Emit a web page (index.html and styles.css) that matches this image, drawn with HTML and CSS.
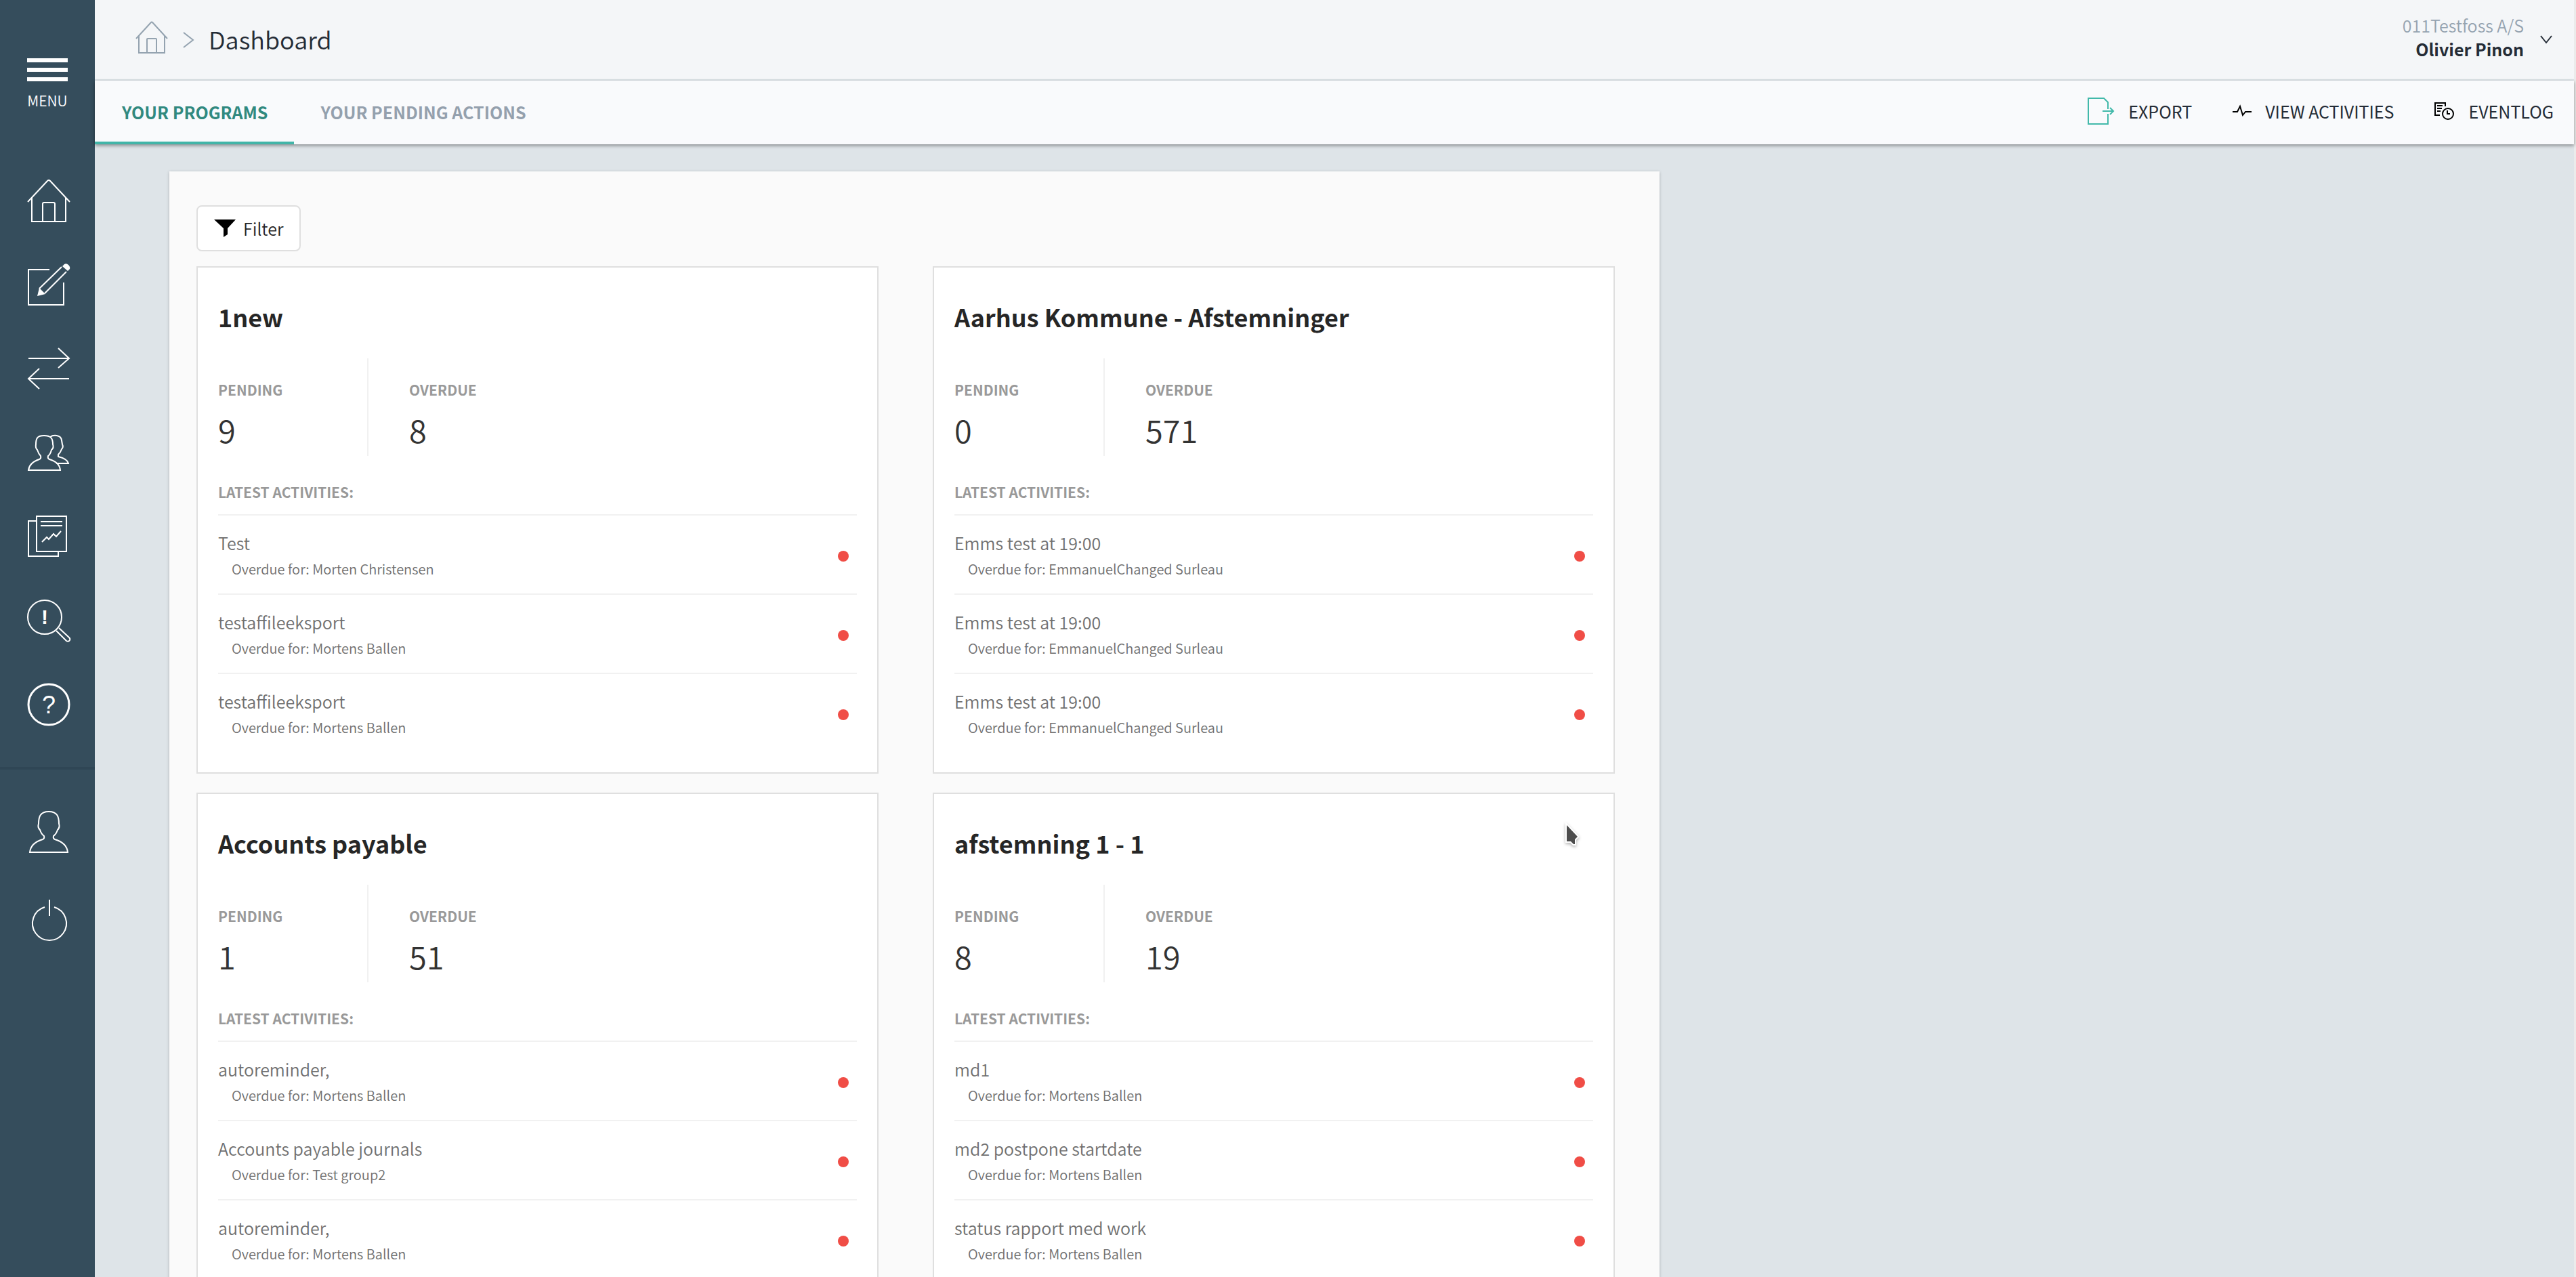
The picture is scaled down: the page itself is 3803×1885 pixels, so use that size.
FILE: index.html
```html
<!DOCTYPE html>
<html lang="en">
<head>
<meta charset="utf-8">
<title>Dashboard</title>
<link rel="stylesheet" href="styles.css">
</head>
<body>
<div class="app">
  <nav class="sidebar" aria-label="Main menu">
    <button class="menu-toggle" type="button">
      <span class="bars"><span class="bar"></span><span class="bar"></span><span class="bar"></span></span>
      MENU
    </button>
    <div class="nav-group">
      <a href="#" aria-label="Home"><svg class="nav-icon" viewBox="0 0 64 64"><path d="M1 34 30 3q2-2 4 0L63 34M7 28V63H57V28M23 63V37q0-2 2-2h14q2 0 2 2V63"/></svg></a>
      <a href="#" aria-label="Edit"><svg class="nav-icon" viewBox="0 0 64 64"><path d="M33 10H2V62H54V29M51 6 18 38M58 13 26 45"/><path class="solid" d="M52 5l3-3q3-2 6 1 3 3 2 6l-3 3zM18 37l9 9-12 3z"/></svg></a>
      <a href="#" aria-label="Transfer"><svg class="nav-icon" viewBox="0 0 64 64"><path d="M2 17H61M46 2 62 17 46 31M62 47H3M18 32 2 47 18 62"/></svg></a>
      <a href="#" aria-label="Users"><svg class="nav-icon" viewBox="0 0 64 64"><path d="M2 58C3 50 9 45 18 42Q21 41 20 37C17 34 16 31 15 28Q12 25 13 20C13 11 15 7 25 7S38 11 38 20Q40 25 36 28C35 32 34 35 31 37Q30 41 33 42C42 45 48 49 49 58ZM34 9C38 6 50 5 51 14L52 20Q54 24 51 27C50 30 48 33 46 35V38C54 40 60 43 61 48H43"/></svg></a>
      <a href="#" aria-label="Reports"><svg class="nav-icon" viewBox="0 0 64 64"><path d="M14 2H58V54H14ZM14 9H2V61H46V54M20 10H52M20 16H52M22 40 29 33 32 36 39 28 43 32 50 24"/></svg></a>
      <a href="#" aria-label="Find issues"><svg class="nav-icon" viewBox="0 0 64 64"><circle cx="26" cy="27" r="25"/><path d="M43 47 58 62Q61 64 63 61 64 59 62 57L47 43"/><text class="mark mark-bold" x="26" y="37">!</text></svg></a>
      <a href="#" aria-label="Help"><svg class="nav-icon" viewBox="0 0 64 64"><circle class="thick" cx="32" cy="32" r="30"/><text class="mark" x="32" y="45">?</text></svg></a>
    </div>
    <div class="nav-group account">
      <a href="#" aria-label="Profile"><svg class="nav-icon" viewBox="0 0 64 64"><path d="M4 62C5 52 13 46 23 43Q26 42 25 38C22 36 20 32 19 29Q15 25 17 20C17 10 19 2 32 2S47 10 47 20Q49 25 45 29C44 32 42 36 39 38Q38 42 41 43C51 46 59 52 60 62Z"/></svg></a>
      <a href="#" aria-label="Log out"><svg class="nav-icon" viewBox="0 0 64 64"><path d="M26 13A25 25 0 1 0 40 13M33 2V26"/></svg></a>
    </div>
  </nav>

  <div class="page">
    <header class="topbar">
      <div class="breadcrumb">
        <a href="#" aria-label="Home"><svg class="crumb-home" viewBox="0 0 48 48"><path d="M1 26 23 2q1-1 2 0L47 26M5 21V47H43V21M17 47V27q0-1 1-1h12q1 0 1 1V47"/></svg></a>
        <svg class="crumb-sep" viewBox="0 0 16 24"><path d="M1 1 15 12 1 23"/></svg>
        <h1 class="crumb-title">Dashboard</h1>
      </div>
      <button class="user" type="button">
        <span class="user-text"><span class="company">011Testfoss A/S</span><span class="name">Olivier Pinon</span></span>
        <svg class="user-arrow" viewBox="0 0 18 12"><path d="M1 1 9 11 17 1"/></svg>
      </button>
    </header>

    <div class="toolbar">
      <div class="tabs">
        <a class="tab active" href="#">YOUR PROGRAMS</a>
        <a class="tab" href="#">YOUR PENDING ACTIONS</a>
      </div>
      <div class="actions">
        <button class="action" type="button"><svg class="icon-export" viewBox="0 0 40 40"><path d="M30 17V7L24 1H1V39H30V24M22 20H38M33 15 38 20 33 25"/></svg>EXPORT</button>
        <button class="action" type="button"><svg class="icon-pulse" viewBox="0 0 28 18"><path d="M0 10H7L11 2 15 15 19 10H28"/></svg>VIEW ACTIVITIES</button>
        <button class="action" type="button"><svg class="icon-log" viewBox="0 0 30 28"><path d="M8 20H1V2H16V7M4 6H12M4 10H11M4 14H9"/><circle cx="20" cy="18" r="8"/><path d="M19 13V18H23"/></svg>EVENTLOG</button>
      </div>
    </div>

    <main class="content">
      <section class="panel">
        <button class="filter" type="button"><svg class="icon-filter" viewBox="0 0 32 26"><path d="M0 0H32L20 13V22L14 26V13Z"/></svg>Filter</button>
        <div class="cards">
          <article class="card">
            <h2 class="card-title">1new</h2>
            <dl class="stats">
              <div class="stat"><dt>PENDING</dt><dd>9</dd></div>
              <div class="stat"><dt>OVERDUE</dt><dd>8</dd></div>
            </dl>
            <h3 class="list-title">LATEST ACTIVITIES:</h3>
            <ul class="activities">
              <li class="activity"><div class="info"><p class="what">Test</p><p class="who">Overdue for: Morten Christensen</p></div><span class="dot"></span></li>
              <li class="activity"><div class="info"><p class="what">testaffileeksport</p><p class="who">Overdue for: Mortens Ballen</p></div><span class="dot"></span></li>
              <li class="activity"><div class="info"><p class="what">testaffileeksport</p><p class="who">Overdue for: Mortens Ballen</p></div><span class="dot"></span></li>
            </ul>
          </article>
          <article class="card">
            <h2 class="card-title">Aarhus Kommune - Afstemninger</h2>
            <dl class="stats">
              <div class="stat"><dt>PENDING</dt><dd>0</dd></div>
              <div class="stat"><dt>OVERDUE</dt><dd>571</dd></div>
            </dl>
            <h3 class="list-title">LATEST ACTIVITIES:</h3>
            <ul class="activities">
              <li class="activity"><div class="info"><p class="what">Emms test at 19:00</p><p class="who">Overdue for: EmmanuelChanged Surleau</p></div><span class="dot"></span></li>
              <li class="activity"><div class="info"><p class="what">Emms test at 19:00</p><p class="who">Overdue for: EmmanuelChanged Surleau</p></div><span class="dot"></span></li>
              <li class="activity"><div class="info"><p class="what">Emms test at 19:00</p><p class="who">Overdue for: EmmanuelChanged Surleau</p></div><span class="dot"></span></li>
            </ul>
          </article>
          <article class="card">
            <h2 class="card-title">Accounts payable</h2>
            <dl class="stats">
              <div class="stat"><dt>PENDING</dt><dd>1</dd></div>
              <div class="stat"><dt>OVERDUE</dt><dd>51</dd></div>
            </dl>
            <h3 class="list-title">LATEST ACTIVITIES:</h3>
            <ul class="activities">
              <li class="activity"><div class="info"><p class="what">autoreminder,</p><p class="who">Overdue for: Mortens Ballen</p></div><span class="dot"></span></li>
              <li class="activity"><div class="info"><p class="what">Accounts payable journals</p><p class="who">Overdue for: Test group2</p></div><span class="dot"></span></li>
              <li class="activity"><div class="info"><p class="what">autoreminder,</p><p class="who">Overdue for: Mortens Ballen</p></div><span class="dot"></span></li>
            </ul>
          </article>
          <article class="card">
            <h2 class="card-title">afstemning 1 - 1</h2>
            <dl class="stats">
              <div class="stat"><dt>PENDING</dt><dd>8</dd></div>
              <div class="stat"><dt>OVERDUE</dt><dd>19</dd></div>
            </dl>
            <h3 class="list-title">LATEST ACTIVITIES:</h3>
            <ul class="activities">
              <li class="activity"><div class="info"><p class="what">md1</p><p class="who">Overdue for: Mortens Ballen</p></div><span class="dot"></span></li>
              <li class="activity"><div class="info"><p class="what">md2 postpone startdate</p><p class="who">Overdue for: Mortens Ballen</p></div><span class="dot"></span></li>
              <li class="activity"><div class="info"><p class="what">status rapport med work</p><p class="who">Overdue for: Mortens Ballen</p></div><span class="dot"></span></li>
            </ul>
            <svg class="pointer" viewBox="0 0 24 36"><path d="M3 4V28H9L13 32H15V25L19 21Z"/></svg>
          </article>
        </div>
      </section>
    </main>
  </div>
</div>
</body>
</html>
```
FILE: styles.css
```css
* { box-sizing: border-box; margin: 0; padding: 0; }
html, body { height: 100%; }
body {
  padding-right: 3px;
  overflow: hidden;
  background: #ebebeb;
  color: #242c36;
  font-family: "Noto Sans CJK JP", "Noto Sans CJK SC", sans-serif;
  font-weight: 350;
}
a { color: inherit; text-decoration: none; }
button { font: inherit; color: inherit; background: none; border: 0; cursor: pointer; }
ul { list-style: none; }
svg { display: block; flex: none; fill: none; stroke: currentColor; stroke-width: 2; overflow: visible; }

.app { display: flex; height: 100%; }

/* Sidebar */
.sidebar { flex: none; width: 140px; background: #354d5c; color: #fff; }
.menu-toggle {
  display: flex; flex-direction: column; align-items: center; gap: 13px;
  width: 100%; height: 204px; padding-top: 86px;
  font-size: 21px; line-height: 30px;
}
.bars { display: flex; flex-direction: column; gap: 8px; }
.bar { width: 60px; height: 6px; background: #fff; }
.nav-group { display: flex; flex-direction: column; gap: 60px; padding: 60px 36px 60px 40px; }
.nav-icon { width: 64px; height: 64px; }
.nav-icon .thick { stroke-width: 3; }
.nav-icon .solid { fill: #fff; stroke: none; }
.mark { fill: #fff; stroke: none; text-anchor: middle; font: 400 36px "Liberation Sans", sans-serif; }
.mark-bold { font-weight: 700; font-size: 30px; }
.account { gap: 66px; border-top: 4px solid #2f4655; }

/* Header */
.page { flex: 1; min-width: 0; display: flex; flex-direction: column; background: #dee4e8; }
.topbar {
  flex: none; display: flex; justify-content: space-between; align-items: center;
  height: 119px; padding: 0 32px 0 60px;
  background: #f4f6f8; border-bottom: 2px solid #dbe2e7;
}
.breadcrumb { display: flex; align-items: center; gap: 22px; }
.crumb-home { width: 48px; height: 48px; margin-bottom: 8px; color: #94a3b0; }
.crumb-sep { width: 16px; height: 24px; color: #94a3b0; }
.crumb-title { padding-bottom: 4px; font-size: 36px; line-height: 48px; font-weight: 350; }
.user { display: flex; align-items: center; gap: 24px; padding-bottom: 8px; text-align: right; }
.user-text { display: flex; flex-direction: column; font-size: 25px; line-height: 35px; }
.company { color: #94a3b0; }
.name { font-weight: 700; }
.user-arrow { width: 18px; height: 12px; margin-top: 6px; }

/* Tabs and actions */
.toolbar {
  flex: none; position: relative; display: flex; justify-content: space-between;
  height: 94px; padding-right: 30px;
  background: #f9fafc; box-shadow: 0 2px 5px rgba(0, 0, 0, .4);
}
.tabs { display: flex; }
.tab {
  display: flex; align-items: center; padding: 2px 39px 0;
  border-bottom: 4px solid transparent;
  color: #94a0ad; font-size: 25px; font-weight: 700;
}
.tab.active { padding-left: 40px; color: #31897f; border-color: #42b5a8; }
.actions { display: flex; gap: 60px; padding-bottom: 4px; }
.action { display: flex; align-items: center; gap: 20px; font-size: 25px; font-weight: 400; }
.icon-export { width: 40px; height: 40px; color: #42b9aa; }
.icon-pulse { width: 28px; height: 18px; color: #000; }
.icon-log { width: 30px; height: 28px; color: #000; }

/* Panel */
.content { flex: 1; min-height: 0; padding: 40px 110px 0; overflow: hidden; }
.panel {
  max-width: 2200px; padding: 50px 66px 50px 40px;
  background: #fafafa; box-shadow: 0 1px 4px rgba(0, 0, 0, .25);
}
.filter {
  display: flex; align-items: center; gap: 11px;
  height: 68px; padding: 0 24px; margin-bottom: 22px;
  background: #fff; border: 2px solid #dfdfdf; border-radius: 8px;
  color: #262626; font-size: 25px;
}
.icon-filter { width: 32px; height: 26px; fill: #000; stroke: none; }
.cards { display: grid; grid-template-columns: 1fr 1fr; gap: 28px 80px; }
.card { position: relative; padding: 50px 30px 30px; background: #fff; border: 2px solid #dfdfdf; }
.card-title { margin-bottom: 40px; color: #262626; font-size: 36px; line-height: 44px; font-weight: 700; }
.stats { display: flex; }
.stat { width: 222px; padding: 31px 0 11px; }
.stat + .stat { width: auto; padding-left: 60px; border-left: 2px solid #f1f1f1; margin-left: -2px; }
.stat dt { margin-bottom: 16px; color: #999; font-size: 21px; line-height: 30px; font-weight: 700; }
.stat dd { color: #333; font-size: 47px; line-height: 56px; }
.list-title { margin: 38px 0 18px; color: #999; font-size: 21px; line-height: 30px; font-weight: 700; }
.activity {
  display: flex; justify-content: space-between; align-items: center;
  height: 117px; padding: 5px 12px 0 0; border-top: 2px solid #f1f1f1; color: #707070;
}
.info { padding-bottom: 6px; }
.what { margin-bottom: 4px; font-size: 25px; line-height: 40px; }
.who { padding-left: 20px; font-size: 20px; line-height: 30px; }
.dot { width: 16px; height: 16px; border-radius: 50%; background: #f04d46; }

.pointer {
  position: absolute; right: 48px; top: 42px; width: 24px; height: 36px;
  fill: #4d4d4d; stroke: #fff; stroke-width: 4; paint-order: stroke;
  filter: drop-shadow(0 2px 2px rgba(0, 0, 0, .3));
}
```
